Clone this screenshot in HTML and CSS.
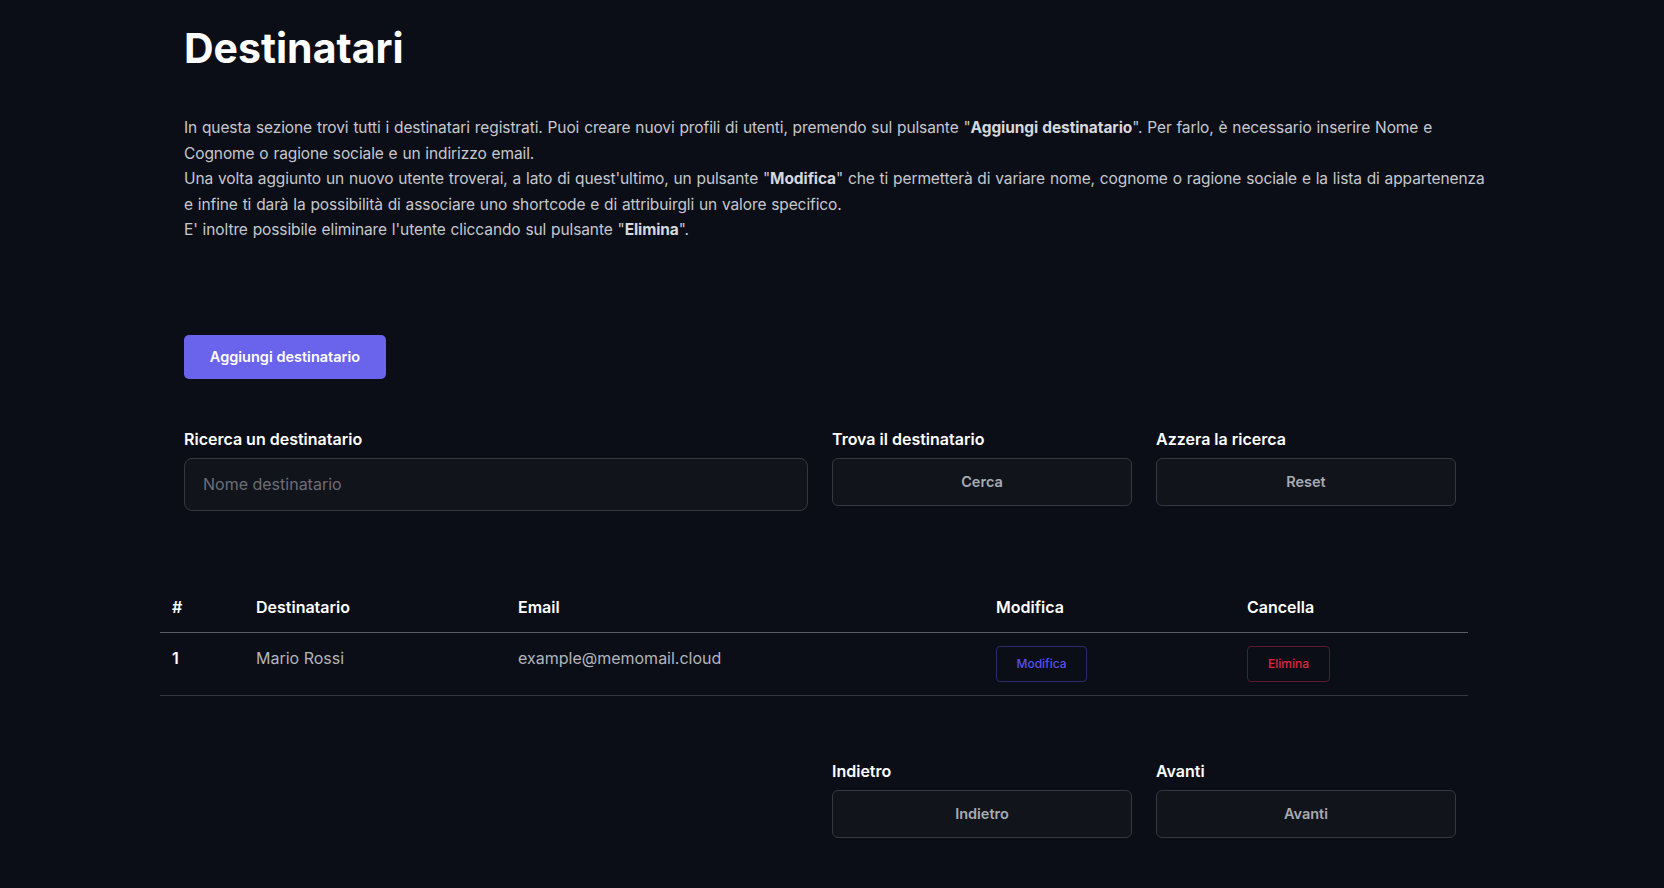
FILE: index.html
```html
<!DOCTYPE html>
<html lang="it">
<head>
<meta charset="utf-8">
<title>Destinatari</title>
<link rel="stylesheet" href="styles.css">
</head>
<body>
<main class="page">
  <h1 class="title">Destinatari</h1>
  <p class="intro">In questa sezione trovi tutti i destinatari registrati. Puoi creare nuovi profili di utenti, premendo sul pulsante "<b>Aggiungi destinatario</b>". Per farlo, è necessario inserire Nome e Cognome o ragione sociale e un indirizzo email.<br>Una volta aggiunto un nuovo utente troverai, a lato di quest'ultimo, un pulsante "<b>Modifica</b>" che ti permetterà di variare nome, cognome o ragione sociale e la lista di appartenenza e infine ti darà la possibilità di associare uno shortcode e di attribuirgli un valore specifico.<br>E' inoltre possibile eliminare l'utente cliccando sul pulsante "<b>Elimina</b>".</p>

  <button class="btn-primary" type="button">Aggiungi destinatario</button>

  <div class="form-row search-row">
    <div class="field">
      <label class="label" for="q">Ricerca un destinatario</label>
      <input id="q" class="input" type="text" placeholder="Nome destinatario">
    </div>
    <div class="field">
      <span class="label">Trova il destinatario</span>
      <button class="btn-ghost" type="button">Cerca</button>
    </div>
    <div class="field">
      <span class="label">Azzera la ricerca</span>
      <button class="btn-ghost" type="button">Reset</button>
    </div>
  </div>

  <table class="table">
    <colgroup>
      <col class="c1"><col class="c2"><col class="c3"><col class="c4"><col class="c5">
    </colgroup>
    <thead>
      <tr><th>#</th><th>Destinatario</th><th>Email</th><th>Modifica</th><th>Cancella</th></tr>
    </thead>
    <tbody>
      <tr>
        <td class="num">1</td>
        <td>Mario Rossi</td>
        <td>example@memomail.cloud</td>
        <td><button class="btn-edit" type="button">Modifica</button></td>
        <td><button class="btn-del" type="button">Elimina</button></td>
      </tr>
    </tbody>
  </table>

  <div class="form-row pager-row">
    <div class="field"></div>
    <div class="field">
      <span class="label">Indietro</span>
      <button class="btn-ghost" type="button">Indietro</button>
    </div>
    <div class="field">
      <span class="label">Avanti</span>
      <button class="btn-ghost" type="button">Avanti</button>
    </div>
  </div>
</main>
</body>
</html>
```
FILE: styles.css
```css
* { box-sizing: border-box; }

html, body {
  margin: 0;
  background: #0c0e17;
}

body {
  font-family: Inter, "Noto Sans", "Liberation Sans", sans-serif;
  color: #c9cbd1;
  height: 888px;
  overflow: hidden;
}

.page {
  width: 1312px;
  margin-left: 184px;
  padding-top: 24px;
}

.title {
  margin: 0;
  font-size: 41px;
  line-height: 48px;
  font-weight: 700;
  color: #ffffff;
}

.intro {
  margin: 43px 0 0;
  font-size: 15.5px;
  letter-spacing: -0.1px;
  word-spacing: 0.6px;
  line-height: 25.6px;
  color: #c6c8ce;
}

.intro b {
  font-weight: 700;
  color: #d6d8dd;
}

.btn-primary {
  display: block;
  margin-top: 92px;
  width: 202px;
  height: 44px;
  border: 0;
  border-radius: 5px;
  background: #6a63ec;
  color: #ffffff;
  font-family: inherit;
  font-size: 14.5px;
  font-weight: 600;
  cursor: pointer;
}

.form-row {
  display: grid;
  grid-template-columns: 624px 300px 300px;
  column-gap: 24px;
}

.search-row { margin-top: 48px; }

.field {
  display: flex;
  flex-direction: column;
}

.label {
  display: block;
  font-size: 16px;
  line-height: 24px;
  font-weight: 600;
  color: #ffffff;
  margin-bottom: 7px;
}

.input {
  height: 53px;
  padding: 0 18px;
  border: 1px solid #363841;
  border-radius: 8px;
  background: #12141c;
  color: #c9cbd1;
  font-family: inherit;
  font-size: 16px;
  outline: none;
}

.input::placeholder { color: #6b6e76; }

.btn-ghost {
  height: 48px;
  border: 1px solid #363841;
  border-radius: 6px;
  background: #12141c;
  color: #a8abb2;
  font-family: inherit;
  font-size: 14.5px;
  font-weight: 600;
  cursor: pointer;
}

.table {
  margin: 71px 0 0 -24px;
  width: 1308px;
  border-collapse: collapse;
  table-layout: fixed;
}

.c1 { width: 84px; }
.c2 { width: 262px; }
.c3 { width: 478px; }
.c4 { width: 251px; }
.c5 { width: 233px; }

.table th,
.table td {
  text-align: left;
  vertical-align: top;
  padding: 13px 12px;
  font-size: 16px;
  line-height: 24px;
}

.table th {
  font-weight: 600;
  color: #ffffff;
  border-bottom: 1px solid #5a5c64;
}

.table td {
  color: #b2b5bc;
  border-bottom: 1px solid #34363e;
}

.table td.num {
  color: #ffffff;
  font-weight: 600;
}

.btn-edit,
.btn-del {
  height: 36px;
  border-radius: 4px;
  background: transparent;
  font-family: inherit;
  font-size: 12px;
  font-weight: 500;
  cursor: pointer;
}

.btn-edit {
  width: 91px;
  border: 1px solid #2d2b70;
  color: #5552ee;
}

.btn-del {
  width: 83px;
  border: 1px solid #5a1a2c;
  color: #e0243f;
}

.pager-row { margin-top: 63px; }
```
